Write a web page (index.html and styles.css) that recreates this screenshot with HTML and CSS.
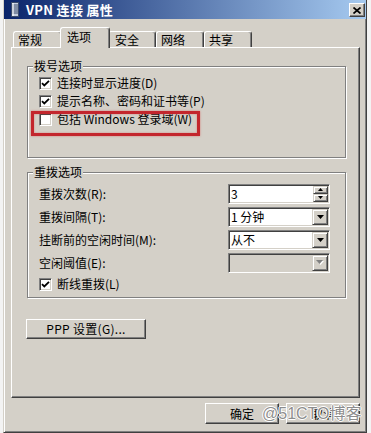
FILE: index.html
```html
<!DOCTYPE html>
<html lang="zh-CN">
<head>
<meta charset="utf-8">
<title>VPN 连接 属性</title>
<link rel="stylesheet" href="styles.css">
</head>
<body>
<div class="window">
  <div class="titlebar">
    <svg class="ticon" width="8" height="15" viewBox="0 0 8 15">
      <rect x="0.5" y="0.5" width="7" height="14" fill="#c6cfdf" stroke="#3a4a6a"/>
      <path d="M1 3h6M1 5h6M1 7h6M1 9h6M1 11h6" stroke="#3a4a6a" stroke-width="1"/>
      <rect x="1" y="1" width="2" height="13" fill="#ffffff" opacity="0.6"/>
    </svg>
    <span class="title">VPN 连接 属性</span>
    <span class="close"><svg width="8" height="7" viewBox="0 0 8 7"><path d="M0.5 0.5L7.5 6.5M7.5 0.5L0.5 6.5" stroke="#000" stroke-width="1.7"/></svg></span>
  </div>
  <div class="content">
    <div class="tabs">
      <div class="tab t1">常规</div>
      <div class="tab sel">选项</div>
      <div class="tab t3">安全</div>
      <div class="tab t4">网络</div>
      <div class="tab t5">共享</div>
    </div>
    <div class="panel">
      <fieldset class="group g1">
        <legend>拨号选项</legend>
        <div class="rows">
          <div class="check"><span class="cb"><svg width="9" height="9" viewBox="0 0 9 9"><path d="M1 4.2L3.3 6.5L8 1.8" fill="none" stroke="#000" stroke-width="1.8"/></svg></span><span>连接时显示进度(D)</span></div>
          <div class="check"><span class="cb"><svg width="9" height="9" viewBox="0 0 9 9"><path d="M1 4.2L3.3 6.5L8 1.8" fill="none" stroke="#000" stroke-width="1.8"/></svg></span><span>提示名称、密码和证书等(P)</span></div>
          <div class="check marked"><span class="cb"></span><span>包括 Windows 登录域(W)</span></div>
        </div>
      </fieldset>
      <fieldset class="group g2">
        <legend>重拨选项</legend>
        <div class="rows2">
          <div class="frow"><span>重拨次数(R):</span>
            <span class="field spin"><span class="val">3</span>
              <span class="spinbtns">
                <span class="sb"><svg width="5" height="3" viewBox="0 0 5 3"><path d="M0 3H5L2.5 0Z" fill="#000"/></svg></span>
                <span class="sb"><svg width="5" height="3" viewBox="0 0 5 3"><path d="M0 0H5L2.5 3Z" fill="#000"/></svg></span>
              </span>
            </span>
          </div>
          <div class="frow"><span>重拨间隔(T):</span>
            <span class="field combo"><span class="val">1 分钟</span><span class="dd"><svg width="7" height="4" viewBox="0 0 7 4"><path d="M0 0H7L3.5 4Z" fill="#000"/></svg></span></span>
          </div>
          <div class="frow"><span>挂断前的空闲时间(M):</span>
            <span class="field combo"><span class="val">从不</span><span class="dd"><svg width="7" height="4" viewBox="0 0 7 4"><path d="M0 0H7L3.5 4Z" fill="#000"/></svg></span></span>
          </div>
          <div class="frow"><span>空闲阈值(E):</span>
            <span class="field combo disabled"><span class="val"></span><span class="dd"><svg width="8" height="5" viewBox="0 0 8 5"><path d="M1 1H8L4.5 5Z" fill="#fff"/><path d="M0 0H7L3.5 4Z" fill="#808080"/></svg></span></span>
          </div>
          <div class="check last"><span class="cb"><svg width="9" height="9" viewBox="0 0 9 9"><path d="M1 4.2L3.3 6.5L8 1.8" fill="none" stroke="#000" stroke-width="1.8"/></svg></span><span>断线重拨(L)</span></div>
        </div>
      </fieldset>
      <button class="btn ppp">PPP 设置(G)...</button>
    </div>
    <div class="actions">
      <button class="btn act">确定</button>
      <button class="btn act">取消</button>
      <span class="watermark">@51CTO博客</span>
    </div>
  </div>
</div>
</body>
</html>
```
FILE: styles.css
```css
* { box-sizing: border-box; }
html, body { margin: 0; padding: 0; }
body {
  width: 371px;
  height: 433px;
  overflow: hidden;
  background: #f3f3f3;
  font: 12px/14px "Noto Sans CJK SC", "Noto Sans", sans-serif;
  color: #000;
}
.window {
  margin-left: 3px;
  width: 364px;
  height: 433px;
  background: #d4d0c8;
  border-left: 1px solid #d4d0c8;
  border-right: 1px solid #404040;
  border-bottom: 1px solid #404040;
  box-shadow: inset 1px 0 #fff, inset -1px -1px #808080;
  display: flex;
  flex-direction: column;
}
.titlebar {
  flex: none;
  height: 19px;
  display: flex;
  align-items: flex-end;
  padding: 0 1px 2px 7px;
  background: linear-gradient(to right, #0a246a, #a6caf0);
}
.ticon { display: block; margin-bottom: 0; }
.title {
  margin-left: 7px;
  color: #fff;
  font-weight: bold;
  font-size: 13px;
  line-height: 14px;
  letter-spacing: 0.3px;
}
.close {
  margin-left: auto;
  width: 16px;
  height: 14px;
  background: #d4d0c8;
  border: 1px solid;
  border-color: #fff #404040 #404040 #fff;
  box-shadow: inset -1px -1px #808080;
  display: flex;
  align-items: center;
  justify-content: center;
}
.close svg { display: block; }
.content {
  flex: 1;
  display: flex;
  flex-direction: column;
  padding: 0 6px 0 7px;
}
.tabs {
  flex: none;
  height: 28px;
  display: flex;
  align-items: flex-end;
  padding-left: 2px;
  position: relative;
  z-index: 1;
}
.tab {
  height: 16px;
  padding: 1px 0 0 4px;
  background: #d4d0c8;
  border: 1px solid #fff;
  border-bottom: none;
  border-right-color: #404040;
  border-radius: 3px 3px 0 0;
  box-shadow: inset -1px 0 #808080;
  line-height: 14px;
}
.t1 { width: 49px; }
.t3, .t4, .t5 { width: 48px; }
.t3 { padding-left: 6px; }
.tab.sel {
  width: 50px;
  height: 21px;
  margin: 0 -2px -1px;
  padding: 2px 0 0 6px;
  position: relative;
  z-index: 2;
}
.panel {
  flex: none;
  height: 351px;
  display: flex;
  flex-direction: column;
  border: 1px solid;
  border-color: #fff #404040 #404040 #fff;
  box-shadow: inset -1px -1px #808080;
  padding: 0 13px 0 15px;
}
.group {
  margin: 0;
  padding: 0;
  min-inline-size: 0;
  border: 1px solid #808080;
  box-shadow: inset 1px 1px #fff, 1px 1px #fff;
}
.group legend {
  margin-left: 5px;
  padding: 0 1px;
  line-height: 14px;
  background: #d4d0c8;
}
.g1 { margin-top: 11px; }
.g2 { margin-top: 7px; }
.rows { padding: 1px 0 29px 11px; }
.rows2 { padding: 3px 15px 3px 11px; }
.check {
  display: flex;
  align-items: center;
  gap: 5px;
  height: 18px;
}
.check.last { height: 20px; }
.check.marked { position: relative; }
.check.marked::after {
  content: "";
  position: absolute;
  left: -8px;
  top: 1px;
  width: 163px;
  height: 19px;
  border: 3px solid #c3262d;
  box-shadow: 0 0 2px rgba(220, 70, 70, 0.6), inset 0 0 2px rgba(220, 70, 70, 0.6);
}
.cb {
  flex: none;
  width: 13px;
  height: 13px;
  background: #fff;
  border: 1px solid;
  border-color: #808080 #fff #fff #808080;
  box-shadow: inset 1px 1px #404040, inset -1px -1px #d4d0c8;
  display: flex;
  align-items: center;
  justify-content: center;
}
.cb svg { display: block; }
.frow {
  display: flex;
  align-items: center;
  justify-content: space-between;
  height: 23px;
}
.field {
  width: 102px;
  height: 20px;
  background: #fff;
  border: 1px solid;
  border-color: #808080 #fff #fff #808080;
  box-shadow: inset 1px 1px #404040, inset -1px -1px #d4d0c8;
  padding: 1px;
  display: flex;
  align-items: stretch;
}
.field .val {
  flex: 1;
  padding-left: 1px;
  line-height: 16px;
}
.field.disabled { background: #d4d0c8; }
.dd, .sb {
  background: #d4d0c8;
  border: 1px solid;
  border-color: #d4d0c8 #404040 #404040 #d4d0c8;
  box-shadow: inset 1px 1px #fff, inset -1px -1px #808080;
  display: flex;
  align-items: center;
  justify-content: center;
}
.dd { width: 16px; }
.dd svg, .sb svg { display: block; }
.spinbtns {
  width: 15px;
  display: flex;
  flex-direction: column;
}
.sb { flex: 1; }
.btn {
  height: 20px;
  padding: 0;
  font: inherit;
  color: #000;
  background: #d4d0c8;
  border: 1px solid;
  border-color: #fff #404040 #404040 #fff;
  box-shadow: inset -1px -1px #808080;
}
.ppp {
  align-self: flex-start;
  width: 120px;
  margin: 21px 0 0 -1px;
  letter-spacing: 0.3px;
}
.actions {
  position: relative;
  display: flex;
  justify-content: flex-end;
  gap: 7px;
  margin-top: 5px;
}
.act { width: 74px; height: 21px; }
.watermark {
  position: absolute;
  left: 251px;
  top: 1px;
  font: 16px/20px "Liberation Sans", "Noto Sans CJK SC", sans-serif;
  color: rgba(120, 120, 120, 0.85);
  text-shadow: 1px 0 #fff, -1px 0 #fff, 0 1px #fff, 0 -1px #fff;
  white-space: nowrap;
}
```
